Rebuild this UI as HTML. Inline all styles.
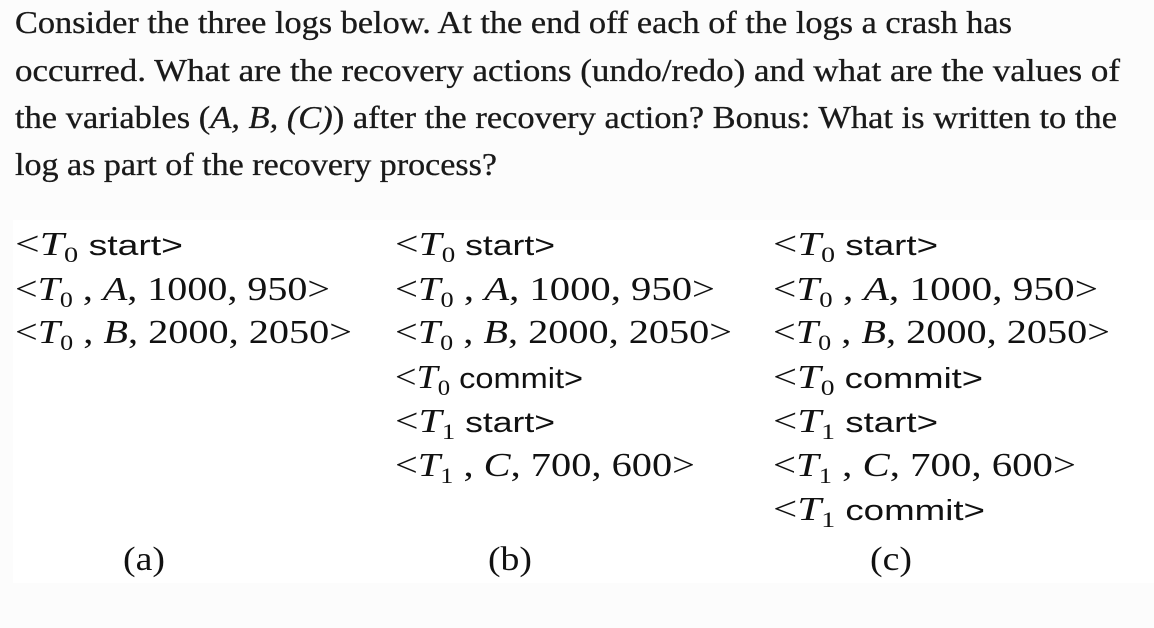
<!DOCTYPE html><html><head><style>
body{margin:0;width:1154px;height:628px;background:#fcfcfc;overflow:hidden}
svg{position:absolute;left:0;top:0}
.h{font-family:"Liberation Serif",serif;font-size:32px;fill:#1a1a1a;stroke:#1a1a1a;stroke-width:0.3px}
.m{font-family:"Liberation Serif",serif;font-size:34px;fill:#111}
.s{font-family:"Liberation Sans",sans-serif;font-size:29px;font-style:normal}
.i{font-style:italic}
.b{font-size:22px;font-style:normal}
</style></head><body>
<svg width="1154" height="628" xmlns="http://www.w3.org/2000/svg">
<text class="h" x="15" y="33" textLength="997" lengthAdjust="spacingAndGlyphs">Consider the three logs below. At the end off each of the logs a crash has</text>
<text class="h" x="15" y="81" textLength="1105" lengthAdjust="spacingAndGlyphs">occurred. What are the recovery actions (undo/redo) and what are the values of</text>
<text class="h" x="15" y="128" textLength="1102" lengthAdjust="spacingAndGlyphs">the variables (<tspan class="i">A, B, (C)</tspan>) after the recovery action? Bonus: What is written to the</text>
<text class="h" x="15" y="175" textLength="482" lengthAdjust="spacingAndGlyphs">log as part of the recovery process?</text>
<rect x="13" y="220" width="1141" height="363" fill="#fff"/>
<g class="m">
<text x="15" y="255" textLength="168" lengthAdjust="spacingAndGlyphs">&lt;<tspan class="i">T</tspan><tspan class="b" dy="7">0</tspan><tspan class="s" dy="-7"> start&gt;</tspan></text>
<text x="15" y="300" textLength="315" lengthAdjust="spacingAndGlyphs">&lt;<tspan class="i">T</tspan><tspan class="b" dy="7">0</tspan><tspan dy="-7"> , </tspan><tspan class="i">A</tspan>,  1000,  950&gt;</text>
<text x="15" y="343" textLength="337" lengthAdjust="spacingAndGlyphs">&lt;<tspan class="i">T</tspan><tspan class="b" dy="7">0</tspan><tspan dy="-7"> , </tspan><tspan class="i">B</tspan>,  2000,  2050&gt;</text>

<text x="395" y="255" textLength="160" lengthAdjust="spacingAndGlyphs">&lt;<tspan class="i">T</tspan><tspan class="b" dy="7">0</tspan><tspan class="s" dy="-7"> start&gt;</tspan></text>
<text x="395" y="300" textLength="320" lengthAdjust="spacingAndGlyphs">&lt;<tspan class="i">T</tspan><tspan class="b" dy="7">0</tspan><tspan dy="-7"> , </tspan><tspan class="i">A</tspan>,  1000,  950&gt;</text>
<text x="395" y="343" textLength="337" lengthAdjust="spacingAndGlyphs">&lt;<tspan class="i">T</tspan><tspan class="b" dy="7">0</tspan><tspan dy="-7"> , </tspan><tspan class="i">B</tspan>,  2000,  2050&gt;</text>
<text x="395" y="388" textLength="188" lengthAdjust="spacingAndGlyphs">&lt;<tspan class="i">T</tspan><tspan class="b" dy="7">0</tspan><tspan class="s" dy="-7"> commit&gt;</tspan></text>
<text x="395" y="432" textLength="160" lengthAdjust="spacingAndGlyphs">&lt;<tspan class="i">T</tspan><tspan class="b" dy="7">1</tspan><tspan class="s" dy="-7"> start&gt;</tspan></text>
<text x="395" y="476" textLength="300" lengthAdjust="spacingAndGlyphs">&lt;<tspan class="i">T</tspan><tspan class="b" dy="7">1</tspan><tspan dy="-7"> , </tspan><tspan class="i">C</tspan>,  700,  600&gt;</text>

<text x="773" y="255" textLength="165" lengthAdjust="spacingAndGlyphs">&lt;<tspan class="i">T</tspan><tspan class="b" dy="7">0</tspan><tspan class="s" dy="-7"> start&gt;</tspan></text>
<text x="773" y="300" textLength="325" lengthAdjust="spacingAndGlyphs">&lt;<tspan class="i">T</tspan><tspan class="b" dy="7">0</tspan><tspan dy="-7"> , </tspan><tspan class="i">A</tspan>,  1000,  950&gt;</text>
<text x="773" y="343" textLength="337" lengthAdjust="spacingAndGlyphs">&lt;<tspan class="i">T</tspan><tspan class="b" dy="7">0</tspan><tspan dy="-7"> , </tspan><tspan class="i">B</tspan>,  2000,  2050&gt;</text>
<text x="773" y="388" textLength="210" lengthAdjust="spacingAndGlyphs">&lt;<tspan class="i">T</tspan><tspan class="b" dy="7">0</tspan><tspan class="s" dy="-7"> commit&gt;</tspan></text>
<text x="773" y="432" textLength="165" lengthAdjust="spacingAndGlyphs">&lt;<tspan class="i">T</tspan><tspan class="b" dy="7">1</tspan><tspan class="s" dy="-7"> start&gt;</tspan></text>
<text x="773" y="476" textLength="303" lengthAdjust="spacingAndGlyphs">&lt;<tspan class="i">T</tspan><tspan class="b" dy="7">1</tspan><tspan dy="-7"> , </tspan><tspan class="i">C</tspan>,  700,  600&gt;</text>
<text x="773" y="520" textLength="212" lengthAdjust="spacingAndGlyphs">&lt;<tspan class="i">T</tspan><tspan class="b" dy="7">1</tspan><tspan class="s" dy="-7"> commit&gt;</tspan></text>

<text x="123" y="570" textLength="42" lengthAdjust="spacingAndGlyphs">(a)</text>
<text x="488" y="570" textLength="44" lengthAdjust="spacingAndGlyphs">(b)</text>
<text x="870" y="570" textLength="42" lengthAdjust="spacingAndGlyphs">(c)</text>
</g>
</svg>
</body></html>
